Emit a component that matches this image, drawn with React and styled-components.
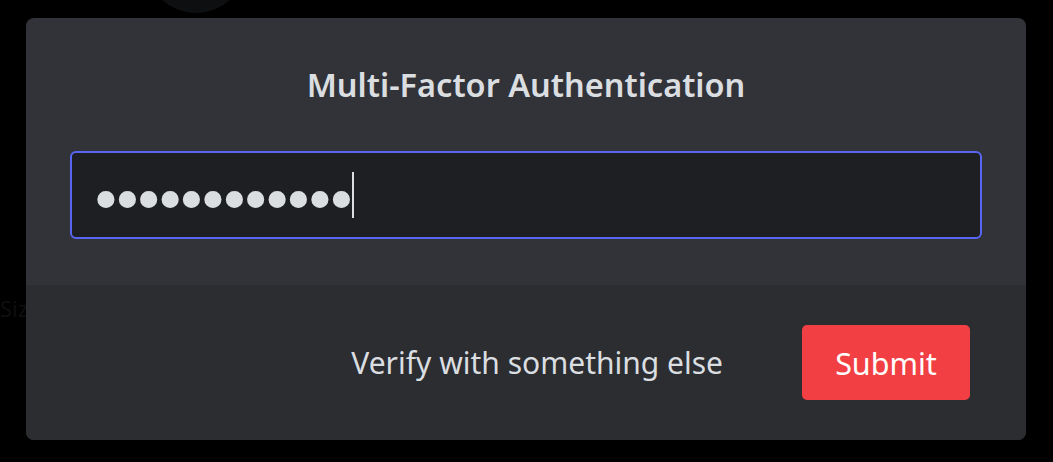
import React from "react";
import styled, { createGlobalStyle } from "styled-components";

const GlobalStyle = createGlobalStyle`
  html, body {
    margin: 0;
    padding: 0;
    background: #000000;
  }
  * {
    box-sizing: border-box;
  }
`;

const Page = styled.div`
  position: relative;
  width: 100%;
  height: 100vh;
  overflow: hidden;
  display: flex;
  align-items: center;
  justify-content: center;
  background: #000000;
`;

// faint bits of the app behind the dimmed overlay
const Avatar = styled.div`
  position: absolute;
  left: 145px;
  top: -89px;
  width: 102px;
  height: 102px;
  border-radius: 50%;
  background: #0e0f10;
`;

const GhostText = styled.span`
  position: absolute;
  left: 0;
  top: 293px;
  font-family: "Noto Sans", sans-serif;
  font-size: 22px;
  color: #0e0e0f;
`;

const Modal = styled.div`
  position: relative;
  width: 1000px;
  border-radius: 8px;
  overflow: hidden;
  background: #313338;
  display: flex;
  flex-direction: column;
  margin: -4px 1px 0 0;
`;

const Body = styled.div`
  display: flex;
  flex-direction: column;
  align-items: center;
  padding: 45px 44px 46px;
  gap: 44px;
`;

const Title = styled.h1`
  margin: 0;
  font-family: "Noto Sans", sans-serif;
  font-weight: 600;
  font-size: 32.5px;
  line-height: 44px;
  color: #dbdee1;
`;

const Field = styled.div`
  width: 100%;
  height: 88px;
  display: flex;
  align-items: center;
  padding: 0 16.5px;
  border: 2px solid #5865f2;
  border-radius: 6px;
  background: #1e1f22;
`;

const CodeInput = styled.input`
  width: 263.5px;
  height: 72px;
  margin-top: 11px;
  padding: 0;
  border: none;
  background: transparent;
  color: #dbdee1;
  caret-color: transparent;
  font-family: "DejaVu Sans", sans-serif;
  font-size: 59px;
  letter-spacing: -13.4px;
  line-height: 72px;
  outline: none;
`;

const Caret = styled.span`
  width: 2px;
  height: 46px;
  background: #dbdee1;
`;

const Footer = styled.div`
  display: flex;
  align-items: center;
  justify-content: flex-end;
  gap: 79px;
  height: 155px;
  padding: 0 56px;
  background: #2b2d31;
`;

const LinkButton = styled.button`
  border: none;
  background: none;
  padding: 0;
  font-family: "Noto Sans", sans-serif;
  font-size: 30px;
  color: #dbdee1;
  cursor: pointer;
`;

const SubmitButton = styled.button`
  width: 168px;
  height: 75px;
  border: none;
  border-radius: 5px;
  background: #f23f43;
  color: #ffffff;
  font-family: "Noto Sans", sans-serif;
  font-size: 30.5px;
  cursor: pointer;
`;

export default function App() {
  return (
    <>
      <GlobalStyle />
      <Page>
        <Avatar />
        <GhostText>Siz</GhostText>
        <Modal>
          <Body>
            <Title>Multi-Factor Authentication</Title>
            <Field>
              <CodeInput type="password" defaultValue="123456789012" autoFocus />
              <Caret />
            </Field>
          </Body>
          <Footer>
            <LinkButton>Verify with something else</LinkButton>
            <SubmitButton>Submit</SubmitButton>
          </Footer>
        </Modal>
      </Page>
    </>
  );
}
